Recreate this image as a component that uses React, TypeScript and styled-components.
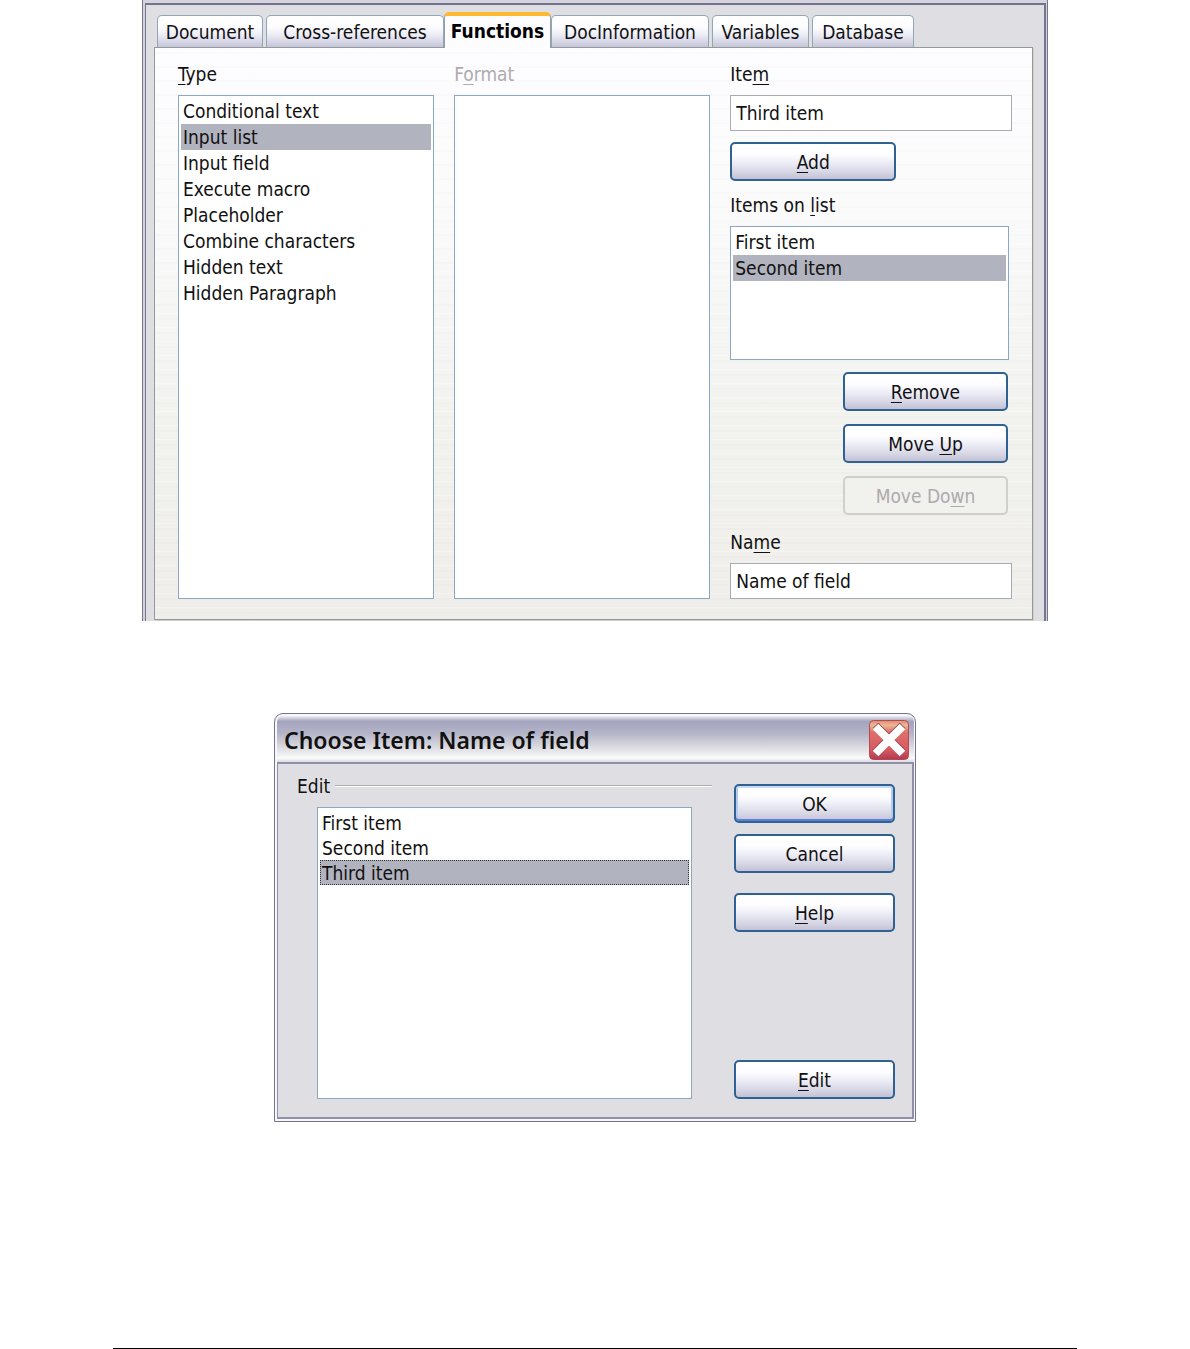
import React, { useState } from "react";
import styled, { createGlobalStyle, css } from "styled-components";

const GlobalStyle = createGlobalStyle`
  *, *::before, *::after { box-sizing: border-box; }
  body {
    margin: 0;
    background: #fff;
    color: #111;
    font-family: "DejaVu Sans Condensed", "DejaVu Sans", sans-serif;
    font-stretch: condensed;
    font-size: 19px;
    line-height: 24px;
  }
  button, input, select { font: inherit; color: inherit; }
`;

const Page = styled.main`
  min-height: 100vh;
  display: flex;
  flex-direction: column;
  align-items: center;
`;

const FieldsWindow = styled.section`
  width: 100%;
  max-width: 906px;
  padding: 3px 1px 0 2px;
  background: #d4d4de;
  border: solid #74748a;
  border-width: 0 1px;
`;

const FieldsBody = styled.div`
  padding: 7px 11px 1px 8px;
  background: #dfdee3;
  border: solid #74748e;
  border-width: 2px 2px 0 1px;
`;

const TabStrip = styled.div`
  display: flex;
  align-items: flex-end;
  padding-left: 3px;
`;

const Tab = styled.button<{ $width: number; $joined?: boolean }>`
  width: ${(p) => p.$width}px;
  height: 32px;
  padding: 0;
  margin-right: ${(p) => (p.$joined ? 0 : 3)}px;
  border: 1px solid #91a7b4;
  border-bottom: 0;
  border-radius: 5px 5px 0 0;
  background: linear-gradient(#fff 0%, #fdfdff 35%, #ededf6 60%, #c6c5da 100%);
  white-space: nowrap;
  &[aria-selected="true"] {
    position: relative;
    height: 36px;
    margin-bottom: -1px;
    padding-bottom: 2px;
    border-color: #91a0a8;
    border-top: 4px solid #fdb932;
    background: #fdfdff;
    font-weight: bold;
    color: #000;
  }
`;

const Panel = styled.div`
  display: grid;
  grid-template-columns: minmax(0, 10fr) minmax(0, 10fr) minmax(0, 11fr);
  column-gap: 20px;
  padding: 14px 20px 20px 23px;
  border: 1px solid #919b9c;
  box-shadow: 1px 1px 0 #d0cec4;
  background:
    repeating-linear-gradient(transparent 0 4px, rgba(110, 110, 90, 0.018) 4px 6px, transparent 6px 13px, rgba(255, 255, 255, 0.3) 13px 14px),
    linear-gradient(#fdfdff 0%, #fbfbfc 25%, #f2f2ef 65%, #efeeea 100%);
`;

const Column = styled.div`
  display: flex;
  flex-direction: column;
`;

const Label = styled.label<{ $disabled?: boolean }>`
  margin-bottom: 9px;
  color: ${(p) => (p.$disabled ? "#aeaaae" : "#111")};
`;

const Key = styled.span`
  text-decoration: underline;
  text-decoration-thickness: 1px;
  text-underline-offset: 3px;
  text-decoration-skip-ink: none;
`;

const ListBox = styled.select<{ $height: number; $row: number; $dotted?: boolean }>`
  appearance: none;
  display: block;
  width: 100%;
  height: ${(p) => p.$height}px;
  padding: 2px;
  border: 1px solid #8aa8c6;
  border-radius: 0;
  background: #fff;
  overflow: hidden;
  opacity: 1;
  option {
    height: ${(p) => p.$row}px;
    padding: 2px 2px 0;
    color: #111;
  }
  option:checked {
    background: #b1b3bf;
    color: #111;
    ${(p) =>
      p.$dotted &&
      css`
        outline: 1px dotted #333;
        outline-offset: -1px;
      `}
  }
`;

const ItemsListSlot = styled.div`
  padding-right: 3px;
`;

const TextInput = styled.input`
  width: 100%;
  height: 36px;
  padding: 0 5px;
  border: 1px solid #a5acb2;
  border-radius: 0;
  background: #fff;
`;

const PushButton = styled.button<{ $primary?: boolean }>`
  width: 100%;
  height: 39px;
  padding: 0;
  border: 2px solid #2f6192;
  border-radius: 5px;
  background: linear-gradient(#fff 0%, #fdfdff 30%, #ebebf6 55%, #d5d4e3 82%, #c3c1d4 100%);
  ${(p) =>
    p.$primary &&
    css`
      box-shadow: inset 0 2px #c5dbf8, inset 0 -2px #5b82d6, inset 2px 0 #b4caee, inset -2px 0 #b4caee;
    `}
  &:disabled {
    border-color: #cfcfcb;
    background: #f1f1ed;
    color: #aeaaae;
  }
`;

const AddSlot = styled.div`
  width: 166px;
  padding: 11px 0 12px;
`;

const ListActions = styled.div`
  align-self: flex-end;
  display: flex;
  flex-direction: column;
  gap: 13px;
  width: 165px;
  margin: 12px 4px 15px 0;
`;

const Dialog = styled.section`
  width: 100%;
  max-width: 642px;
  margin-top: 92px;
  border: 1px solid #74748a;
  border-radius: 9px 9px 0 0;
  background: #f6f6fb;
  padding: 1px 1px 1px 2px;
`;

const TitleBar = styled.header`
  display: flex;
  align-items: center;
  justify-content: space-between;
  height: 47px;
  padding: 3px 5px 0 7px;
  border-radius: 7px 7px 0 0;
  background: linear-gradient(#fff 0%, #e3e3ee 4%, #a5a4bf 13%, #b3b3c8 38%, #d6d6dd 65%, #fbfbfb 92%, #d9d9e2 100%);
`;

const Title = styled.h1`
  margin: 0;
  font-family: "Noto Sans", "Open Sans", sans-serif;
  font-size: 23px;
  line-height: 32px;
  font-weight: 600;
`;

const CloseButton = styled.button`
  display: flex;
  width: 40px;
  height: 40px;
  padding: 0;
  border: 0;
  background: none;
`;

const DialogBody = styled.div`
  display: grid;
  grid-template-columns: minmax(0, 1fr) 161px;
  column-gap: 22px;
  margin-bottom: 1px;
  padding: 10px 17px 18px 19px;
  border: 2px solid #8f8fa8;
  border-left-width: 1px;
  background: #dfdee3;
`;

const EditGroup = styled.fieldset`
  min-width: 0;
  margin: 0;
  padding: 9px 20px 0;
  border: 0;
  border-top: 2px groove #fff;
`;

const Legend = styled.legend`
  margin-left: -20px;
  padding: 0 5px 0 0;
`;

const DialogActions = styled.div`
  display: flex;
  flex-direction: column;
  gap: 11px;
  padding-top: 10px;
`;

const HelpSlot = styled.div`
  padding-top: 9px;
`;

const EditSlot = styled.div`
  margin-top: auto;
`;

const PageRule = styled.hr`
  width: calc(100% - 226px);
  height: 1px;
  margin: auto 0 0;
  border: 0;
  background: #000;
`;

const tabs = [
  { name: "Document", width: 106 },
  { name: "Cross-references", width: 178, joined: true },
  { name: "Functions", width: 107, joined: true },
  { name: "DocInformation", width: 158 },
  { name: "Variables", width: 97 },
  { name: "Database", width: 102 },
];

const types = [
  "Conditional text",
  "Input list",
  "Input field",
  "Execute macro",
  "Placeholder",
  "Combine characters",
  "Hidden text",
  "Hidden Paragraph",
];

function CloseIcon() {
  return (
    <svg width="40" height="40" viewBox="0 0 40 40" aria-hidden="true">
      <defs>
        <linearGradient id="close-fill" x1="0" y1="0" x2="0" y2="1">
          <stop offset="0" stopColor="#d98a72" />
          <stop offset="0.12" stopColor="#ecb893" />
          <stop offset="0.3" stopColor="#dd6f6c" />
          <stop offset="0.75" stopColor="#d65a5f" />
          <stop offset="1" stopColor="#ae3a52" />
        </linearGradient>
      </defs>
      <rect x="0.5" y="0.5" width="39" height="39" rx="4" fill="url(#close-fill)" stroke="#b9474f" />
      <path d="M6.500 5.500 34 33M33.500 5.500 6 33" stroke="#8c3348" strokeWidth="8" />
      <path d="M6.500 6.500 33.500 33.500M33.500 6.500 6.500 33.500" stroke="#fff" strokeWidth="8" />
    </svg>
  );
}

export default function App() {
  const [tab, setTab] = useState("Functions");
  const [item, setItem] = useState("Third item");
  const [name, setName] = useState("Name of field");

  return (
    <>
      <GlobalStyle />
      <Page>
        <FieldsWindow aria-label="Fields">
          <FieldsBody>
            <TabStrip role="tablist">
              {tabs.map((t) => (
                <Tab
                  key={t.name}
                  type="button"
                  role="tab"
                  aria-selected={t.name === tab}
                  $width={t.width}
                  $joined={t.joined}
                  onClick={() => setTab(t.name)}
                >
                  {t.name}
                </Tab>
              ))}
            </TabStrip>
            <Panel role="tabpanel">
              <Column>
                <Label htmlFor="type"><Key>T</Key>ype</Label>
                <ListBox id="type" size={8} defaultValue="Input list" $height={504} $row={26}>
                  {types.map((t) => <option key={t}>{t}</option>)}
                </ListBox>
              </Column>
              <Column>
                <Label htmlFor="format" $disabled>F<Key>o</Key>rmat</Label>
                <ListBox id="format" size={8} disabled $height={504} $row={26} />
              </Column>
              <Column>
                <Label htmlFor="item">Ite<Key>m</Key></Label>
                <TextInput id="item" value={item} onChange={(e) => setItem(e.target.value)} />
                <AddSlot>
                  <PushButton type="button"><Key>A</Key>dd</PushButton>
                </AddSlot>
                <Label htmlFor="items">Items on <Key>l</Key>ist</Label>
                <ItemsListSlot>
                  <ListBox id="items" size={4} defaultValue="Second item" $height={134} $row={26}>
                    <option>First item</option>
                    <option>Second item</option>
                  </ListBox>
                </ItemsListSlot>
                <ListActions>
                  <PushButton type="button"><Key>R</Key>emove</PushButton>
                  <PushButton type="button">Move <Key>U</Key>p</PushButton>
                  <PushButton type="button" disabled>Move Do<Key>w</Key>n</PushButton>
                </ListActions>
                <Label htmlFor="name">Na<Key>m</Key>e</Label>
                <TextInput id="name" value={name} onChange={(e) => setName(e.target.value)} />
              </Column>
            </Panel>
          </FieldsBody>
        </FieldsWindow>

        <Dialog role="dialog" aria-labelledby="dialog-title">
          <TitleBar>
            <Title id="dialog-title">Choose Item: Name of field</Title>
            <CloseButton type="button" aria-label="Close"><CloseIcon /></CloseButton>
          </TitleBar>
          <DialogBody>
            <EditGroup>
              <Legend id="edit-legend">Edit</Legend>
              <ListBox
                aria-labelledby="edit-legend"
                size={5}
                defaultValue="Third item"
                $height={292}
                $row={25}
                $dotted
              >
                <option>First item</option>
                <option>Second item</option>
                <option>Third item</option>
              </ListBox>
            </EditGroup>
            <DialogActions>
              <PushButton type="button" $primary>OK</PushButton>
              <PushButton type="button">Cancel</PushButton>
              <HelpSlot>
                <PushButton type="button"><Key>H</Key>elp</PushButton>
              </HelpSlot>
              <EditSlot>
                <PushButton type="button"><Key>E</Key>dit</PushButton>
              </EditSlot>
            </DialogActions>
          </DialogBody>
        </Dialog>

        <PageRule />
      </Page>
    </>
  );
}
